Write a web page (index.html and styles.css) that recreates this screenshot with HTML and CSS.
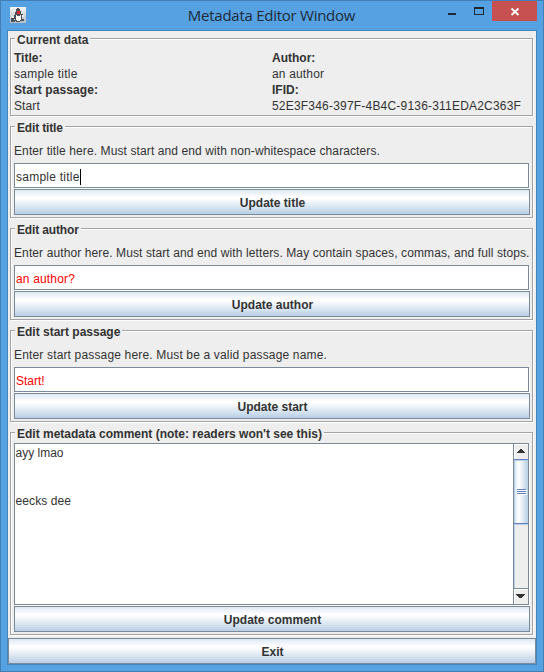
FILE: index.html
```html
<!DOCTYPE html>
<html lang="en">
<head>
<meta charset="utf-8">
<title>Metadata Editor Window</title>
<link rel="stylesheet" href="styles.css">
</head>
<body>
<div class="window">
  <header class="titlebar">
    <svg class="app-icon" width="16" height="16" viewBox="0 0 16 16" shape-rendering="crispEdges">
      <defs><linearGradient id="tile" x1="0" y1="0" x2="0" y2="1"><stop offset="0" stop-color="#f4f4f2"/><stop offset="1" stop-color="#b4bcc4"/></linearGradient></defs>
      <rect width="16" height="16" fill="url(#tile)"/>
      <path d="M7 1h2v1h1v2h1v3h2v1h1v2h-2v4h-2v1H6v-1H5v-2H4v1H2v1H1v-3h1V9h2V8h1V5h1V2h1z" fill="#4a5056"/>
      <path d="M6 8h1v1h3V8h1v5h-1v1H7v-1H6z" fill="#f7f7f5"/>
      <path d="M12 8h2v2h-2zM2 9h2v2H2z" fill="#e8ebed"/>
      <path d="M1 13h4v2H1zM12 12h2v2h-2z" fill="#4f575e"/>
      <rect x="7" y="4" width="3" height="3" fill="#d92827"/>
    </svg>
    <h1>Metadata Editor Window</h1>
    <div class="controls">
      <svg width="92" height="20" viewBox="0 0 92 20" shape-rendering="crispEdges">
        <rect x="3" y="12" width="8" height="2" fill="#1d2a36"/>
        <path d="M29 6h10v8H29zM30 8v5h8V8z" fill="#1d2a36" fill-rule="evenodd"/>
        <rect x="47" y="0" width="45" height="20" fill="#c75050"/>
        <path d="M66.500 7.500l7 6.500M73.500 7.500L66.500 14" stroke="#fff" stroke-width="1.800" fill="none" shape-rendering="auto"/>
      </svg>
    </div>
  </header>
  <main class="content">
    <section class="group">
      <h2 class="legend">Current data</h2>
      <div class="data">
        <b>Title:</b><b>Author:</b>
        <span class="wide">sample title</span><span class="loose">an author</span>
        <b class="slight">Start passage:</b><b>IFID:</b>
        <span class="slight">Start</span><span class="ifid">52E3F346-397F-4B4C-9136-311EDA2C363F</span>
      </div>
    </section>
    <section class="group">
      <h2 class="legend tight">Edit title</h2>
      <p class="hint slight">Enter title here. Must start and end with non-whitespace characters.</p>
      <div class="field"><span class="wide">sample title</span><i class="caret"></i></div>
      <button class="button">Update title</button>
    </section>
    <section class="group">
      <h2 class="legend tight">Edit author</h2>
      <p class="hint slight">Enter author here. Must start and end with letters. May contain spaces, commas, and full stops.</p>
      <div class="field invalid"><span class="loose">an author?</span></div>
      <button class="button">Update author</button>
    </section>
    <section class="group">
      <h2 class="legend">Edit start passage</h2>
      <p class="hint loose">Enter start passage here. Must be a valid passage name.</p>
      <div class="field invalid"><span>Start!</span></div>
      <button class="button">Update start</button>
    </section>
    <section class="group grow">
      <h2 class="legend">Edit metadata comment (note: readers won't see this)</h2>
      <div class="scroll">
        <div class="text"><p>ayy lmao</p><p></p><p></p><p class="slight">eecks dee</p></div>
        <div class="bar">
          <div class="arrow up"><svg width="14" height="15" shape-rendering="crispEdges"><path d="M6 5h2v1h1v1h1v1h1v1H3V8h1V7h1V6h1z" fill="#333"/></svg></div>
          <div class="thumb"><i></i><i></i><i></i></div>
          <div class="track"></div>
          <div class="arrow down"><svg width="14" height="15" shape-rendering="crispEdges"><path d="M2 5h9v1h-1v1H9v1H8v1H5V8H4V7H3V6H2z" fill="#333"/></svg></div>
        </div>
      </div>
      <button class="button">Update comment</button>
    </section>
    <button class="button">Exit</button>
  </main>
</div>
</body>
</html>
```
FILE: styles.css
```css
* { box-sizing: border-box; margin: 0; padding: 0; }
body { width: 544px; height: 672px; overflow: hidden; font: 12px/16px "Liberation Sans", Arial, sans-serif; color: #333; }
.window { width: 544px; height: 672px; border: 1px solid #4180b4; background: #55a1e2; padding: 0 6px 6px; display: flex; flex-direction: column; }
.titlebar { height: 29px; flex: none; display: grid; grid-template-columns: 90px 1fr 92px; }
.app-icon { margin: 6px 0 0 3px; }
h1 { font: 15px/29px "Open Sans", "Noto Sans", sans-serif; color: #1d2b38; text-align: center; letter-spacing: -.26px; white-space: nowrap; padding-left: 1px; }
.controls { height: 20px; }
.controls svg { display: block; }
.content { flex: 1; border: 1px solid #4285bd; background: #eee; display: flex; flex-direction: column; }
.group { position: relative; padding: 18px 6px 6px; height: 102px; flex: none; display: flex; flex-direction: column; }
.group:first-child { height: 88px; }
.group::before { content: ""; position: absolute; inset: 7px 3px 3px 2px; border: 1px solid #a3a3a3; box-shadow: 1px 1px 0 #fff, inset 1px 1px 0 #fff; pointer-events: none; }
.group.grow { flex: 1; height: auto; }
.legend { position: absolute; left: 7px; top: 0; height: 17px; padding: 0 2px; background: #eee; font-size: 12px; line-height: 19px; white-space: nowrap; }
.slight { letter-spacing: .105px; }
.loose { letter-spacing: .16px; }
.wide { letter-spacing: .25px; }
.ifid { letter-spacing: .2px; }
.tight { letter-spacing: -.15px; }
.data { display: grid; grid-template-columns: 1fr 1fr; grid-auto-rows: 16px; line-height: 18px; white-space: nowrap; position: relative; }
.hint { position: relative; height: 26px; line-height: 28px; white-space: nowrap; }
.field { position: relative; width: 515px; height: 25px; margin-bottom: 1px; border: 1px solid #7a8a99; box-shadow: 1px 1px 0 #fff; background: #fff; padding: 2px 0 0 1px; display: flex; align-items: center; white-space: nowrap; }
.invalid { color: #f00; }
.caret { width: 1px; height: 16px; background: #000; }
.button { position: relative; width: 100%; height: 26px; flex: none; border: 1px solid #7a8a99; background: linear-gradient(#dde8f3, #fff 30%, #fff 36%, #b8cfe5); padding: 2px 0 0 1px; font: bold 12px/22px "Liberation Sans", Arial, sans-serif; color: #333; text-align: center; }
.scroll { position: relative; width: 515px; flex: 1; margin-bottom: 1px; border: 1px solid #7a8a99; border-right: 0; box-shadow: 1px 1px 0 #fff; display: flex; background: #fff; }
.text { flex: 1; line-height: 16px; padding: 1px 0 1px .5px; }
.text p { height: 16px; }
.bar { width: 16px; display: flex; flex-direction: column; border: solid #7a8a99; border-width: 0 1px; background: #eee; }
.arrow { height: 15px; box-shadow: inset 1px 1px 0 #fff; flex: none; }
.arrow svg { display: block; }
.thumb { height: 65px; border: solid #6382bf; border-width: 1px 0; background: linear-gradient(90deg, #c8ddf2, #fff 30%, #fff 36%, #b8cfe5); box-shadow: inset 1px 1px 0 #b8cfe5; display: flex; flex-direction: column; align-items: center; justify-content: center; gap: 1px; padding-left: 1px; }
.thumb i { width: 9px; height: 1px; background: #6382bf; box-shadow: 1px 1px 0 #fff; }
.track { flex: 1; box-shadow: inset 1px 1px 0 #b8cfe5; }
.down { border-top: 1px solid #7a8a99; height: 16px; }
```
